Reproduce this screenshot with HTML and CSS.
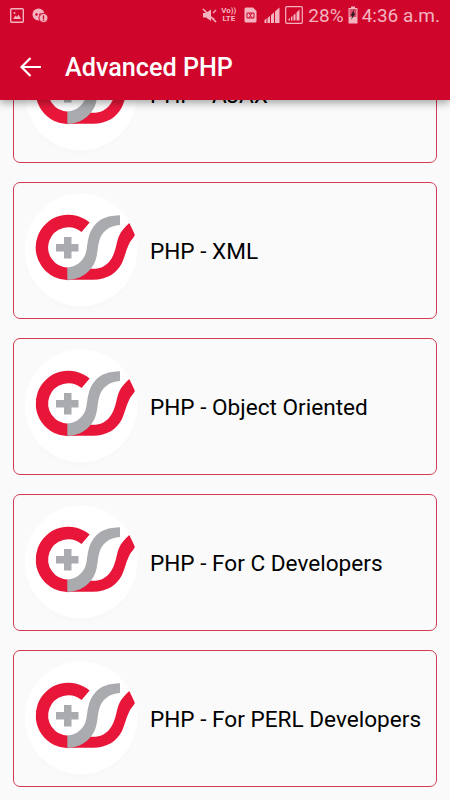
FILE: index.html
```html
<!DOCTYPE html>
<html lang="en">
<head>
    <meta charset="UTF-8">
    <meta name="viewport" content="width=device-width, initial-scale=1.0">
    <title>Advanced PHP</title>
    <link rel="stylesheet" href="styles.css">
</head>
<body>

<svg class="defs" width="0" height="0">
    <symbol id="logo" viewBox="0 0 112 112">
        <path d="M42.5 85.8 L68 85.8 C82 85.8 92 79 97 69 C100 62 101 56 105 48 C107 45 109 43 110 40.7 L104.3 29 C100 33 96 37 94 42 C91 49 91 60 84 68 C79 73.5 74 74.7 68 74.7 L42.5 74.7 Z" fill="#e8173a"/>
        <path d="M43.5 80 A26.5 26.5 0 1 1 60.6 33.3" fill="none" stroke="#e8173a" stroke-width="12.500"/>
        <path d="M95 21.3 C84 21.5 75 24 69 32 C63 40 63 47 61.5 56 C60 66 52 73 42.3 73.5 L42.3 85.8 C55 85.8 64 79 69 70 C73 62 72 54 74.5 46 C77 38 84 31.5 95 31 Z" fill="#a9abae"/>
        <path d="M39 43 H46.5 V50 H53.500 V57.500 H46.500 V64.500 H39 V57.500 H31 V50 H39 Z" fill="#a9abae"/>
    </symbol>
</svg>

<header class="appbar">
    <div class="statusbar">
        <div class="status-left">
            <svg width="14" height="15" viewBox="0 0 14 15"><rect x="0.7" y="0.7" width="12.600" height="13.600" rx="1" fill="none" stroke="#f3b4c0" stroke-width="1.400"/><path d="M3 11 L5.500 7.500 L7 9 L8.500 6.500 L11 11 Z" fill="#f3b4c0"/><circle cx="4.500" cy="5" r="1" fill="#f3b4c0"/></svg>
            <svg width="16" height="15" viewBox="0 0 16 15"><circle cx="6.500" cy="6.500" r="6" fill="#f3b4c0"/><circle cx="4.500" cy="6.500" r="1.300" fill="#d0052b"/><circle cx="8.500" cy="6.500" r="1.300" fill="#d0052b"/><circle cx="11.500" cy="10" r="4.500" fill="#f3b4c0" stroke="#d0052b"/><rect x="10.800" y="7.500" width="1.400" height="3.400" fill="#d0052b"/><rect x="10.800" y="11.500" width="1.400" height="1.300" fill="#d0052b"/></svg>
        </div>
        <div class="status-right">
            <svg class="ic-mute" width="16" height="15" viewBox="0 0 16 15"><path d="M2 5 H5 L10 1.500 V13 L5 9.500 H2 Z" fill="#f3b4c0"/><path d="M2 1 L15 14" stroke="#f3b4c0" stroke-width="1.600"/><path d="M12 5 L15 2 M12 10 L13 11" stroke="#f3b4c0" stroke-width="1.200"/></svg>
            <div class="volte"><span>Vo))</span><span>LTE</span></div>
            <svg class="ic-sim" width="13" height="16" viewBox="0 0 13 16"><path d="M2 0.500 H9 L12.500 4 V14 Q12.500 15.500 11 15.500 H2 Q0.500 15.500 0.500 14 V2 Q0.500 0.500 2 0.500 Z" fill="#f3b4c0"/><path d="M3 6 H10 V11 H3 Z M5 6 L8 11 M8 6 L5 11" fill="none" stroke="#d0052b" stroke-width="1"/></svg>
            <svg class="ic-signal" width="16" height="16" viewBox="0 0 16 16"><path d="M0.500 16 V13 L2.500 11.500 V16 Z M3.500 16 V11 L6 9 V16 Z M7 16 V8 L10 5.500 V16 Z" fill="#f3b4c0"/><path d="M11 16 V4.500 L15.500 0.500 V16 Z" fill="#f3b4c0"/></svg>
            <svg class="ic-signal-box" width="18" height="18" viewBox="0 0 18 18"><rect x="0.700" y="0.700" width="16.600" height="16.600" rx="1" fill="none" stroke="#f3b4c0" stroke-width="1.200"/><path d="M3.500 14.500 V13 L5 12 V14.500 Z M6 14.500 V11 L7.500 10 V14.500 Z M8.500 14.500 V9 L10.500 7.500 V14.500 Z M11.500 14.500 V6.500 L14.500 3.500 V14.500 Z" fill="#f3b4c0"/></svg>
            <span class="status-text pct">28%</span>
            <svg class="ic-batt" width="10" height="18" viewBox="0 0 10 18"><path d="M3 0.500 H7 V2 H9.500 V17.500 H0.500 V2 H3 Z" fill="#f3b4c0"/><path d="M1.500 3 H8.500 V11 H1.500 Z" fill="#d0052b" opacity="0.600"/><path d="M6.500 3 L2.500 9.500 H4.500 L3 14 L7.500 7.500 H5.500 Z" fill="#26141a"/></svg>
            <span class="status-text">4:36 a.m.</span>
        </div>
    </div>
    <div class="toolbar">
        <svg class="back" width="22" height="20" viewBox="0 0 22 20"><path d="M21 10 H2 M10.500 1 L1.500 10 L10.500 19" fill="none" stroke="#fff" stroke-width="2.200"/></svg>
        <h1>Advanced PHP</h1>
    </div>
</header>

<main class="list">
    <div class="card">
        <svg class="logo"><use href="#logo"/></svg>
        <span class="card-title">PHP - AJAX</span>
    </div>
    <div class="card">
        <svg class="logo"><use href="#logo"/></svg>
        <span class="card-title">PHP - XML</span>
    </div>
    <div class="card">
        <svg class="logo"><use href="#logo"/></svg>
        <span class="card-title">PHP - Object Oriented</span>
    </div>
    <div class="card">
        <svg class="logo"><use href="#logo"/></svg>
        <span class="card-title">PHP - For C Developers</span>
    </div>
    <div class="card">
        <svg class="logo"><use href="#logo"/></svg>
        <span class="card-title">PHP - For PERL Developers</span>
    </div>
</main>

</body>
</html>
```

FILE: styles.css
```css
html, body { height: 100%; }
body { margin: 0; width: 450px; height: 800px; overflow: hidden; background-color: #fafafa; font-family: Roboto, sans-serif; }
.defs { display: block; height: 0; }

.appbar { position: relative; z-index: 2; height: 100px; background-color: #d0052b; box-shadow: 0 3px 8px rgba(0, 0, 0, 0.35); }
.statusbar { height: 30px; display: flex; justify-content: space-between; align-items: center; padding: 0 10px; }
.status-left { display: flex; align-items: center; gap: 8px; margin-top: 1px; }
.status-right { display: flex; align-items: center; }
.status-text { font-size: 19px; color: #f3b4c0; white-space: nowrap; }
.pct { margin-left: 5px; }
.volte { display: flex; flex-direction: column; align-items: center; width: 17px; margin-left: 3px; font-size: 8px; line-height: 8px; font-weight: 700; color: #f3b4c0; }
.ic-sim { margin-left: 7px; }
.ic-signal { margin-left: 7px; }
.ic-signal-box { margin-left: 5px; }
.ic-batt { margin-left: 4px; margin-right: 4px; }

.toolbar { height: 70px; padding-top: 2px; display: flex; align-items: center; padding-left: 20px; }
.back { flex: none; }
.toolbar h1 { margin: 0 0 0 23px; font-size: 25.2px; font-weight: 500; color: #fff; }

.list { margin-top: -74px; padding: 0 13px; display: flex; flex-direction: column; gap: 19px; }
.card { height: 135px; display: flex; align-items: center; gap: 13px; padding-left: 11px; background-color: #fafafa; border: 1px solid #d33b52; border-radius: 7px; }
.logo { flex: none; width: 112px; height: 112px; margin-bottom: 1px; background-color: #fff; border-radius: 50%; box-shadow: 0 0 3px rgba(255, 255, 255, 0.9), 0 3px 5px rgba(0, 0, 0, 0.015); }
.card-title { padding-top: 2px; font-size: 22.6px; color: #000; white-space: nowrap; }
```
